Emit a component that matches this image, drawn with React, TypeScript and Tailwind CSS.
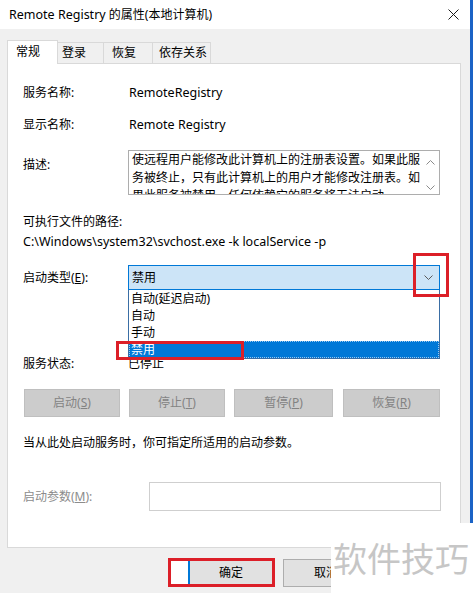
import React from 'react';

const FONT = "font-['Noto_Sans','Noto_Sans_CJK_SC',sans-serif]";

function Tab({ label, active, w, pl }: { label: string; active?: boolean; w: string; pl: string }) {
  if (active) {
    return (
      <div className={`${w} ${pl} h-[24px] -mb-px relative z-10 bg-white border border-b-0 border-[#d9d9d9] pt-[3px] leading-[16px]`}>
        {label}
      </div>
    );
  }
  return (
    <div className={`${w} ${pl} h-[21px] bg-[#f0f0f0] border border-l-0 border-b-0 border-[#d9d9d9] pt-[2px] leading-[16px]`}>
      {label}
    </div>
  );
}

function GrayButton({ text, k, w }: { text: string; k: string; w: string }) {
  return (
    <div className={`${w} h-[28px] flex items-center justify-center bg-[#cccccc] border border-[#bfbfbf] text-[#838383]`}>
      {text}(<span className="underline">{k}</span>)
    </div>
  );
}

export default function App() {
  return (
    <div className={`relative w-[473px] h-[593px] overflow-hidden flex bg-white text-[12px] text-black ${FONT}`}>
      <div className="w-[470px] flex flex-col">
        {/* title bar */}
        <div className="h-[29px] bg-white flex items-center justify-between pl-[9px] pr-[11px]">
          <span className="leading-[16px]">
            <span className="text-[12.5px]">Remote Registry</span> 的属性(本地计算机)
          </span>
          <svg width="11" height="11" viewBox="0 0 11 11">
            <path d="M0.5 0.5 L10.5 10.5 M10.5 0.5 L0.5 10.5" stroke="#1a1a1a" strokeWidth="1" />
          </svg>
        </div>

        <div className="flex-1 bg-[#f0f0f0] pl-[7px] pr-[9px] pt-[10px] flex flex-col">
          {/* tabs */}
          <div className="flex items-end h-[24px]">
            <Tab label="常规" active w="w-[51px]" pl="pl-[8px]" />
            <Tab label="登录" w="w-[46px]" pl="pl-[4px]" />
            <Tab label="恢复" w="w-[49px]" pl="pl-[8px]" />
            <Tab label="依存关系" w="w-[58px]" pl="pl-[6px]" />
          </div>

          {/* panel */}
          <div className="h-[485px] bg-white border border-[#d9d9d9] pl-[15px] flex flex-col leading-[16px]">
            <div className="mt-[21px] flex">
              <span className="w-[106px]">服务名称:</span>
              <span className="text-[12.5px]">RemoteRegistry</span>
            </div>
            <div className="mt-[16px] flex">
              <span className="w-[106px]">显示名称:</span>
              <span className="text-[12.5px]">Remote Registry</span>
            </div>
            <div className="mt-[17px] flex">
              <span className="w-[105px] pt-[7px]">描述:</span>
              <div className="w-[312px] h-[45px] border border-[#adadad] flex overflow-hidden">
                <div className="w-[292px] pl-[3px] leading-[18px] whitespace-nowrap">
                  <div>使远程用户能修改此计算机上的注册表设置。如果此服</div>
                  <div>务被终止，只有此计算机上的用户才能修改注册表。如</div>
                  <div>果此服务被禁用，任何依赖它的服务将无法启动。</div>
                </div>
                <div className="flex-1 flex flex-col items-center justify-between pt-[9px] pb-[4px]">
                  <svg width="9" height="5" viewBox="0 0 9 5">
                    <polyline points="0.5,4.5 4.5,0.5 8.5,4.5" fill="none" stroke="#8a8a8a" strokeWidth="1" />
                  </svg>
                  <svg width="9" height="5" viewBox="0 0 9 5">
                    <polyline points="0.5,0.5 4.5,4.5 8.5,0.5" fill="none" stroke="#8a8a8a" strokeWidth="1" />
                  </svg>
                </div>
              </div>
            </div>
            <div className="mt-[19px]">可执行文件的路径:</div>
            <div className="mt-[4px] text-[12.5px]">C:\Windows\system32\svchost.exe -k localService -p</div>
            <div className="mt-[15px] flex items-center">
              <span className="w-[105px]">
                启动类型(<span className="underline">E</span>):
              </span>
              <div className="w-[312px] h-[25px] bg-[#cce4f7] border border-[#0078d7] flex items-center justify-between pl-[3px] pr-[6px]">
                <span>禁用</span>
                <svg width="9" height="5" viewBox="0 0 9 5">
                  <polyline points="0.5,0.5 4.5,4.5 8.5,0.5" fill="none" stroke="#5a5a5a" strokeWidth="1" />
                </svg>
              </div>
            </div>
            <div className="mt-[66px] flex">
              <span className="w-[105px]">服务状态:</span>
              <span>已停止</span>
            </div>
            <div className="mt-[17px] ml-[1px] flex gap-[9px]">
              <GrayButton text="启动" k="S" w="w-[96px]" />
              <GrayButton text="停止" k="T" w="w-[96px]" />
              <GrayButton text="暂停" k="P" w="w-[99px]" />
              <div className="ml-[1px]">
                <GrayButton text="恢复" k="R" w="w-[97px]" />
              </div>
            </div>
            <div className="mt-[18px]">当从此处启动服务时，你可指定所适用的启动参数。</div>
            <div className="mt-[31px] flex items-center">
              <span className="w-[126px] text-[#8c8c8c]">
                启动参数(<span className="underline">M</span>):
              </span>
              <div className="w-[292px] h-[29px] border border-[#cfcfcf] bg-white" />
            </div>
          </div>

          {/* bottom buttons */}
          <div className="mt-[10px] flex pl-[161px] gap-[8px]">
            <div className="w-[107px] h-[29px] border-[3px] border-[#dc1f28] bg-white flex">
              <div className="w-[17px]" />
              <div className="flex-1 bg-[#e1e1e1] border-l-2 border-[#0078d7] flex items-center justify-center">
                确定
              </div>
            </div>
            <div className="w-[86px] h-[28px] mt-[1px] bg-[#e1e1e1] border border-[#adadad] flex items-center justify-center">
              取消
            </div>
          </div>
        </div>
      </div>
      <div className="w-[3px] bg-[#1b63c6]" />

      {/* open dropdown list */}
      <div className="absolute left-[128px] top-[290px] w-[312px] h-[69px] bg-white border border-t-0 border-[#3a6ea5] leading-[17px]">
        <div className="pl-[2px]">自动(延迟启动)</div>
        <div className="pl-[2px]">自动</div>
        <div className="pl-[2px]">手动</div>
        <div className="pl-[2px] h-[17px] bg-[#0078d7] text-white outline-1 outline-dotted outline-offset-[-1px] outline-[#9cc8ee]">禁用</div>
      </div>

      {/* red highlight boxes */}
      <div className="absolute left-[413px] top-[253px] w-[36px] h-[44px] border-[3px] border-[#dc1f28]" />
      <div className="absolute left-[116px] top-[341px] w-[128px] h-[19px] border-[3px] border-[#dc1f28]" />

      {/* watermark */}
      <div className="absolute left-[331px] top-[523px] w-[142px] h-[70px] bg-white pl-[2px] pt-[15px] text-[34px] leading-[40px] text-[#c6c6c6] font-['Noto_Sans_CJK_SC',sans-serif]">
        软件技巧
      </div>
    </div>
  );
}
